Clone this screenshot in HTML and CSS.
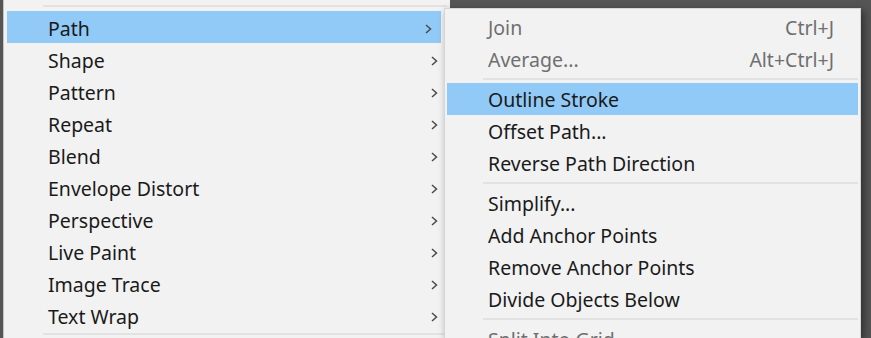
FILE: index.html
```html
<!DOCTYPE html>
<html lang="en">
<head>
  <meta charset="UTF-8">
  <title>Object menu - Path</title>
  <link rel="stylesheet" href="styles.css">
</head>
<body>
  <div class="menu main-menu">
    <div class="sep"></div>
    <div class="item active"><span class="label">Path</span><svg class="chev" viewBox="0 0 7 10"><polyline points="1,1 5.5,5 1,9"/></svg></div>
    <div class="item"><span class="label">Shape</span><svg class="chev" viewBox="0 0 7 10"><polyline points="1,1 5.5,5 1,9"/></svg></div>
    <div class="item"><span class="label">Pattern</span><svg class="chev" viewBox="0 0 7 10"><polyline points="1,1 5.5,5 1,9"/></svg></div>
    <div class="item"><span class="label">Repeat</span><svg class="chev" viewBox="0 0 7 10"><polyline points="1,1 5.5,5 1,9"/></svg></div>
    <div class="item"><span class="label">Blend</span><svg class="chev" viewBox="0 0 7 10"><polyline points="1,1 5.5,5 1,9"/></svg></div>
    <div class="item"><span class="label">Envelope Distort</span><svg class="chev" viewBox="0 0 7 10"><polyline points="1,1 5.5,5 1,9"/></svg></div>
    <div class="item"><span class="label">Perspective</span><svg class="chev" viewBox="0 0 7 10"><polyline points="1,1 5.5,5 1,9"/></svg></div>
    <div class="item"><span class="label">Live Paint</span><svg class="chev" viewBox="0 0 7 10"><polyline points="1,1 5.5,5 1,9"/></svg></div>
    <div class="item"><span class="label">Image Trace</span><svg class="chev" viewBox="0 0 7 10"><polyline points="1,1 5.5,5 1,9"/></svg></div>
    <div class="item"><span class="label">Text Wrap</span><svg class="chev" viewBox="0 0 7 10"><polyline points="1,1 5.5,5 1,9"/></svg></div>
    <div class="sep last"></div>
  </div>

  <div class="menu sub-menu">
    <div class="item disabled"><span class="label">Join</span><span class="key">Ctrl+J</span></div>
    <div class="item disabled"><span class="label">Average...</span><span class="key">Alt+Ctrl+J</span></div>
    <div class="sep"></div>
    <div class="item active"><span class="label">Outline Stroke</span></div>
    <div class="item"><span class="label">Offset Path...</span></div>
    <div class="item"><span class="label">Reverse Path Direction</span></div>
    <div class="sep"></div>
    <div class="item"><span class="label">Simplify...</span></div>
    <div class="item"><span class="label">Add Anchor Points</span></div>
    <div class="item"><span class="label">Remove Anchor Points</span></div>
    <div class="item"><span class="label">Divide Objects Below</span></div>
    <div class="sep"></div>
    <div class="item disabled"><span class="label">Split Into Grid...</span></div>
  </div>
</body>
</html>
```

FILE: styles.css
```css
body{
  margin: 0;
  height: 338px;
  overflow: hidden;
  display: flex;
  align-items: flex-start;
  background-color: #555555;
  font-family: "Noto Sans", sans-serif;
  font-size: 19.5px;
  color: #1a1a1a;
}
.menu{
  background-color: #f2f2f2;
  box-sizing: border-box;
}
.main-menu{
  width: 447px;
  height: 338px;
  margin-left: 3px;
  border-left: 1px solid #c4c4c4;
  padding: 0 3px;
}
.sub-menu{
  position: relative;
  width: 417px;
  height: 330px;
  margin-top: 8px;
  margin-left: -6px;
  border: 1px solid #d6d6d6;
  border-bottom: none;
  padding: 2px 2px 0;
  box-shadow: 3px 3px 8px rgba(0, 0, 0, 0.45);
  overflow: hidden;
}
.item{
  display: flex;
  align-items: center;
  box-sizing: border-box;
  height: 32px;
  padding-top: 3px;
  padding-left: 41px;
  padding-right: 9px;
}
.sub-menu .item{
  padding-top: 1px;
  padding-right: 24px;
}
.label{
  flex: 1;
  white-space: nowrap;
}
.key{
  white-space: nowrap;
}
.active{
  background-color: #91c9f7;
}
.disabled{
  color: #6f6f6f;
}
.chev{
  width: 7px;
  height: 10px;
  fill: none;
  stroke: #4a4a4a;
  stroke-width: 1.5;
}
.main-menu .active{
  margin-right: 6px;
}
.sep{
  height: 2px;
  margin: 3px 0 3px 36px;
  background-color: #e2e2e2;
}
.main-menu .sep:first-child{
  margin-top: 5px;
  margin-bottom: 4px;
}
.main-menu .last{
  margin-top: 2px;
}
```
